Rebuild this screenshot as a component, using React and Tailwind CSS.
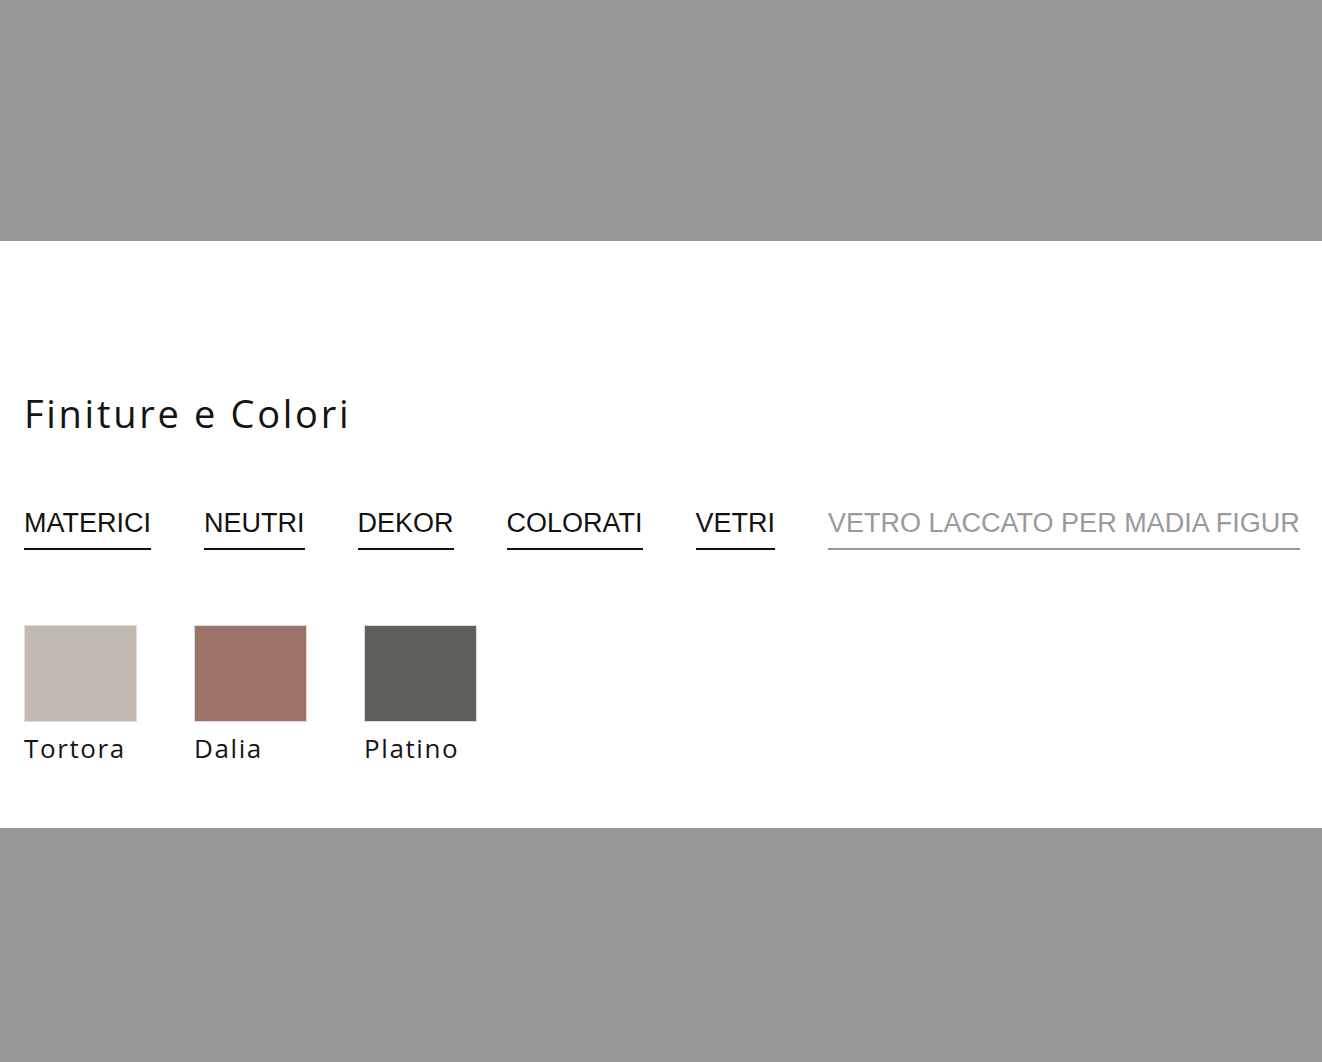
import React from "react";

const tabs = [
  { label: "MATERICI", active: true },
  { label: "NEUTRI", active: true },
  { label: "DEKOR", active: true },
  { label: "COLORATI", active: true },
  { label: "VETRI", active: true },
  { label: "VETRO LACCATO PER MADIA FIGUR", active: false },
];

const swatches = [
  { name: "Tortora", color: "bg-[#c1bab2]" },
  { name: "Dalia", color: "bg-[#9c7168]" },
  { name: "Platino", color: "bg-[#5f5e5a]" },
];

export default function App() {
  return (
    <div className="min-h-screen bg-[#989898] flex flex-col">
      <div className="h-[241px] shrink-0" />

      <section className="bg-white h-[587px] shrink-0 overflow-hidden px-6 pt-[149px]">
        <h2 className="font-['Open_Sans',sans-serif] text-[38px] leading-[46px] tracking-[2.7px] text-[#141414] font-normal">
          Finiture e Colori
        </h2>

        <div className="mt-[72px] flex gap-[53px] whitespace-nowrap font-['Liberation_Sans',Arial,sans-serif] text-[27px] leading-[30px]">
          {tabs.map((tab) => (
            <div
              key={tab.label}
              className={
                tab.active
                  ? "shrink-0 pb-[10px] border-b-2 border-[#111] text-[#111]"
                  : "shrink-0 pb-[10px] border-b-2 border-[#999] text-[#9a9a9a]"
              }
            >
              {tab.label}
            </div>
          ))}
        </div>

        <div className="mt-[75px] flex gap-[57px]">
          {swatches.map((s) => (
            <div key={s.name} className="w-[113px] shrink-0">
              <div className={`h-[97px] border border-[#e0dcd8] ${s.color}`} />
              <p className="mt-[10px] font-['Open_Sans',sans-serif] text-[26px] leading-[32px] tracking-[1.6px] text-[#161616] whitespace-nowrap">
                {s.name}
              </p>
            </div>
          ))}
        </div>
      </section>

      <div className="flex-1" />
    </div>
  );
}
